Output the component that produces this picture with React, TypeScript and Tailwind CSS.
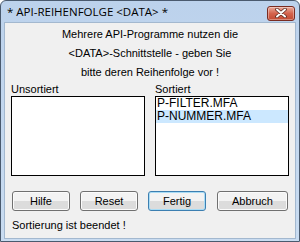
const UNSORTED: string[] = [];
const SORTED = ['P-FILTER.MFA', 'P-NUMMER.MFA'];

function CloseButton() {
  return (
    <div className="flex h-[15px] w-[28px] items-center justify-center rounded-[3px] border border-[#7a2b21] bg-gradient-to-b from-[#e9a99a] via-[#d4634d] to-[#c24a32] shadow-[inset_0_0_0_1px_rgba(255,255,255,0.35)]">
      <svg width="12" height="10" viewBox="0 0 12 10">
        <path d="M2 1.5 L10 8.5 M10 1.5 L2 8.5" stroke="#5a2a22" strokeWidth="3.6" strokeLinecap="round" />
        <path d="M2 1.5 L10 8.5 M10 1.5 L2 8.5" stroke="#ffffff" strokeWidth="2" strokeLinecap="round" />
      </svg>
    </div>
  );
}

interface ListBoxProps {
  label: string;
  items: string[];
  selected?: number;
}

function ListBox({ label, items, selected }: ListBoxProps) {
  return (
    <div className="flex w-[134px] flex-col">
      <div className="h-[13px] leading-[13px]">{label}</div>
      <div className="h-[80px] border border-[#000] bg-white">
        {items.map((item, i) => (
          <div
            key={item}
            className={`h-[13px] pl-[1px] text-[12px] leading-[13px] ${i === selected ? 'bg-[#cce8ff]' : ''}`}
          >
            {item}
          </div>
        ))}
      </div>
    </div>
  );
}

interface ButtonProps {
  label: string;
  width: string;
  primary?: boolean;
}

function Button({ label, width, primary }: ButtonProps) {
  return (
    <div
      className={`flex h-[20px] items-center justify-center rounded-[3px] border bg-gradient-to-b from-[#f3f3f3] from-50% to-[#dcdcdc] to-50% ${width} ${
        primary ? 'border-[#3c7fb1] shadow-[inset_0_0_0_1px_#a9dcf5]' : 'border-[#707070] shadow-[inset_0_0_0_1px_#fbfbfb]'
      }`}
    >
      {label}
    </div>
  );
}

export default function App() {
  return (
    <div className="h-[242px] w-[300px] overflow-hidden bg-white">
      <div
        className="flex h-[242px] w-[300px] flex-col rounded-t-[6px] border border-[#4a5a6e] bg-gradient-to-b from-[#bcd2ec] to-[#c9dcf1]"
        style={{ fontFamily: '"Liberation Sans", Arial, sans-serif' }}
      >
        {/* Title bar */}
        <div className="flex h-[21px] items-center justify-between pl-[6px] pr-[4px] pt-[1px]">
          <span
            className="text-[11.5px] text-black"
            style={{ fontFamily: '"Open Sans", "Noto Sans", sans-serif' }}
          >
            * API-REIHENFOLGE &lt;DATA&gt; *
          </span>
          <div className="mt-[2px]">
            <CloseButton />
          </div>
        </div>

        {/* Client area */}
        <div className="mx-[3px] mb-[2px] flex flex-1 flex-col border border-[#a3b8cf] bg-[#f0f0f0] text-[11px] text-black">
          <div className="mt-[2px] flex flex-col items-center leading-[19px]">
            <div>Mehrere API-Programme nutzen die</div>
            <div>&lt;DATA&gt;-Schnittstelle - geben Sie</div>
            <div>bitte deren Reihenfolge vor !</div>
          </div>

          <div className="mt-[1px] flex gap-[10px] pl-[6px]">
            <ListBox label="Unsortiert" items={UNSORTED} />
            <ListBox label="Sortiert" items={SORTED} selected={1} />
          </div>

          <div className="mt-[15px] flex pl-[7px]">
            <Button label="Hilfe" width="w-[58px]" />
            <div className="ml-[10px]">
              <Button label="Reset" width="w-[58px]" />
            </div>
            <div className="ml-[10px]">
              <Button label="Fertig" width="w-[58px]" primary />
            </div>
            <div className="ml-[11px]">
              <Button label="Abbruch" width="w-[71px]" />
            </div>
          </div>

          <div className="mt-[8px] pl-[7px] leading-[13px]">Sortierung ist beendet !</div>
        </div>
      </div>
    </div>
  );
}
